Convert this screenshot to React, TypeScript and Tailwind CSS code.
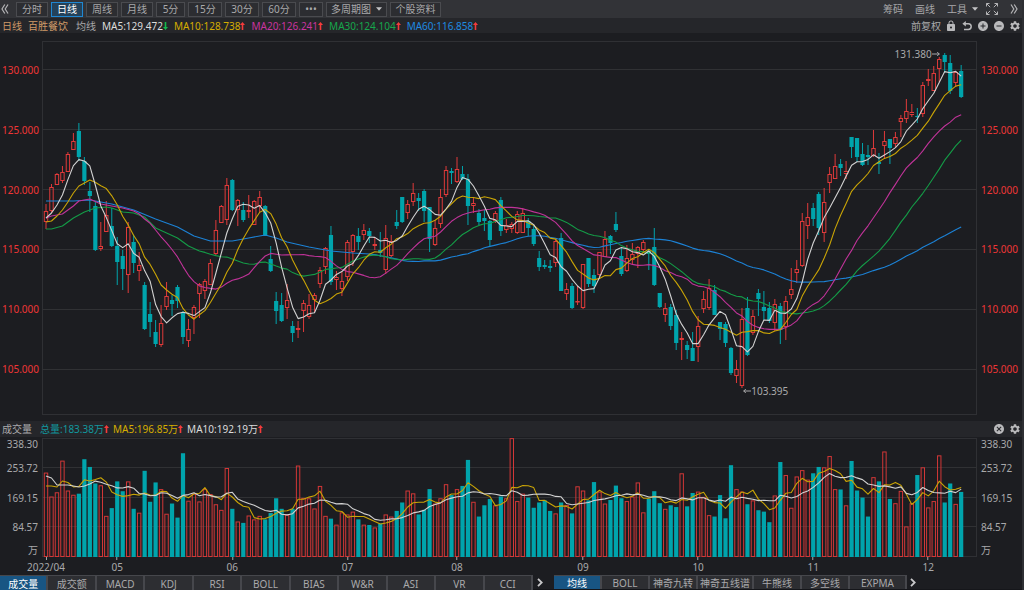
import React, { useState } from "react";
import clsx from "clsx";
import {
  MdAddCircle,
  MdCancel,
  MdLock,
  MdRemoveCircle,
  MdSettings,
} from "react-icons/md";

// [high, body top, body bottom, low, rising] on the price canvas
type Candle = [number, number, number, number, 0 | 1];

const FIRST_X = 46;
const STEP = 5.48;
const VOLUME_BASE = 557;
const VOLUME_SCALE = 119 / 338.3;

const candles: Candle[] = [
  [204, 211, 222, 229, 1], [184, 187, 211, 213, 1], [173, 174, 185, 185, 1],
  [166, 172, 181, 183, 1], [152, 154, 172, 172, 1], [133, 141, 150, 150, 1],
  [123, 131, 157, 161, 0], [157, 161, 181, 185, 0], [182, 191, 196, 212, 0],
  [202, 206, 250, 251, 0], [222, 246, 249, 251, 1], [201, 215, 232, 232, 1],
  [208, 226, 246, 247, 0], [237, 246, 262, 285, 0], [250, 256, 269, 290, 0],
  [222, 227, 275, 293, 1], [235, 242, 263, 273, 0], [252, 265, 271, 281, 1],
  [282, 285, 329, 330, 0], [302, 314, 322, 337, 0], [320, 332, 344, 347, 0],
  [305, 323, 345, 347, 1], [282, 296, 307, 310, 1], [295, 300, 304, 316, 0],
  [285, 287, 301, 308, 0], [311, 313, 337, 344, 0], [319, 329, 341, 347, 1],
  [305, 307, 318, 334, 1], [283, 284, 294, 318, 1], [279, 281, 291, 299, 1],
  [259, 263, 285, 285, 1], [220, 230, 254, 255, 1], [205, 206, 223, 223, 1],
  [178, 185, 220, 225, 1], [179, 180, 210, 211, 0], [199, 200, 210, 226, 1],
  [202, 210, 220, 222, 0], [195, 210, 212, 218, 1], [200, 201, 225, 225, 1],
  [191, 197, 206, 212, 1], [205, 206, 236, 236, 0], [246, 259, 271, 272, 0],
  [292, 301, 311, 324, 0], [293, 305, 321, 322, 0], [284, 300, 308, 319, 1],
  [321, 326, 333, 342, 0], [321, 328, 330, 338, 1], [300, 303, 311, 332, 1],
  [294, 305, 317, 319, 1], [293, 295, 300, 313, 1], [267, 270, 284, 288, 1],
  [247, 248, 267, 274, 1], [226, 235, 282, 285, 0], [271, 277, 280, 290, 1],
  [272, 281, 289, 296, 1], [240, 242, 277, 281, 1], [234, 235, 252, 266, 1],
  [228, 236, 242, 250, 0], [224, 230, 235, 240, 1], [228, 231, 236, 243, 0],
  [237, 244, 246, 250, 1], [232, 250, 253, 257, 0], [225, 238, 270, 274, 1],
  [235, 241, 256, 257, 1], [210, 222, 226, 229, 0], [197, 197, 222, 223, 0],
  [200, 204, 213, 219, 1], [183, 193, 202, 206, 1], [193, 198, 201, 211, 0],
  [189, 191, 211, 222, 0], [207, 207, 239, 252, 0], [220, 228, 245, 246, 1],
  [189, 197, 224, 228, 1], [166, 170, 195, 197, 1], [168, 171, 173, 184, 0],
  [157, 169, 182, 183, 1], [166, 174, 179, 180, 0], [174, 179, 206, 225, 0],
  [197, 203, 206, 213, 1], [209, 213, 222, 225, 0], [210, 218, 221, 231, 0],
  [220, 221, 240, 246, 0], [211, 213, 221, 223, 1], [197, 200, 231, 236, 0],
  [219, 225, 230, 233, 1], [222, 224, 229, 233, 1], [211, 214, 233, 234, 1],
  [208, 213, 233, 233, 1], [218, 221, 228, 236, 0], [226, 229, 244, 246, 0],
  [251, 258, 267, 271, 0], [260, 265, 267, 269, 0], [260, 266, 268, 272, 0],
  [239, 241, 263, 267, 1], [233, 238, 291, 291, 0], [283, 289, 294, 300, 1],
  [283, 286, 308, 309, 0], [286, 301, 302, 305, 1], [264, 264, 308, 309, 1],
  [258, 258, 284, 287, 0], [269, 275, 286, 293, 0], [252, 252, 275, 277, 1],
  [231, 239, 257, 257, 1], [235, 236, 243, 254, 0], [212, 224, 230, 232, 0],
  [248, 256, 274, 276, 0], [245, 258, 271, 272, 1], [243, 254, 260, 264, 1],
  [246, 247, 254, 268, 1], [240, 242, 250, 252, 1], [249, 251, 254, 270, 0],
  [228, 247, 285, 286, 0], [293, 293, 307, 308, 0], [303, 308, 315, 322, 1],
  [304, 307, 326, 330, 0], [310, 315, 343, 350, 0], [332, 338, 340, 360, 1],
  [341, 345, 350, 359, 0], [332, 348, 361, 361, 0], [316, 326, 347, 362, 1],
  [291, 299, 309, 313, 1], [279, 288, 308, 310, 1], [285, 290, 315, 315, 0],
  [322, 322, 329, 340, 0], [322, 324, 343, 347, 0], [347, 348, 373, 375, 0],
  [360, 369, 376, 383, 1], [308, 319, 386, 388, 1], [297, 308, 355, 356, 0],
  [310, 316, 333, 335, 1], [289, 293, 299, 316, 0], [291, 307, 311, 320, 0],
  [302, 308, 321, 323, 0], [299, 304, 323, 331, 1], [303, 306, 330, 344, 0],
  [296, 301, 327, 340, 1], [268, 289, 295, 299, 1], [260, 269, 273, 283, 1],
  [213, 221, 266, 267, 1], [203, 217, 226, 239, 1], [203, 208, 219, 226, 0],
  [192, 194, 228, 235, 0], [188, 202, 233, 242, 1], [167, 174, 183, 193, 1],
  [154, 166, 179, 179, 1], [159, 164, 168, 176, 0], [161, 171, 174, 179, 1],
  [137, 137, 147, 158, 0], [138, 138, 157, 162, 0], [143, 154, 165, 166, 0],
  [145, 155, 157, 165, 0], [130, 148, 156, 157, 1], [153, 162, 164, 174, 0],
  [131, 141, 146, 158, 1], [139, 139, 148, 164, 0], [132, 137, 144, 147, 1],
  [115, 118, 122, 137, 1], [99, 111, 119, 123, 1], [104, 112, 115, 117, 1],
  [108, 116, 117, 123, 0], [82, 85, 114, 117, 1], [69, 79, 81, 86, 1],
  [66, 73, 91, 91, 1], [57, 59, 69, 82, 1], [53, 55, 62, 73, 0],
  [55, 63, 91, 94, 0], [71, 72, 83, 87, 1], [65, 71, 97, 98, 0],
];

const volumes = [
  240, 172, 184, 274, 189, 177, 180, 278, 256, 209, 204, 117, 139, 215, 187,
  215, 137, 126, 245, 157, 212, 193, 123, 152, 112, 295, 160, 180, 158, 193,
  179, 150, 134, 253, 137, 101, 97, 118, 107, 117, 107, 125, 167, 137, 120,
  137, 260, 168, 167, 138, 202, 117, 109, 92, 127, 121, 129, 107, 92, 91,
  84, 95, 121, 115, 131, 155, 189, 181, 121, 134, 193, 152, 167, 207, 176,
  193, 202, 276, 157, 115, 147, 165, 147, 172, 167, 338, 159, 180, 169, 140,
  155, 161, 131, 124, 155, 148, 124, 201, 189, 161, 213, 186, 152, 162, 203,
  167, 159, 172, 212, 127, 166, 187, 153, 137, 147, 142, 238, 144, 182, 186,
  171, 119, 115, 176, 110, 261, 193, 186, 150, 161, 133, 129, 99, 175, 270,
  233, 140, 229, 247, 220, 238, 256, 255, 287, 193, 192, 147, 273, 189, 169,
  115, 227, 215, 300, 165, 153, 188, 87, 153, 233, 255, 141, 159, 289, 155,
  209, 151, 185,
];

const months = [
  { label: "2022/04", index: 0 },
  { label: "05", index: 13 },
  { label: "06", index: 34 },
  { label: "07", index: 55 },
  { label: "08", index: 75 },
  { label: "09", index: 98 },
  { label: "10", index: 119 },
  { label: "11", index: 140 },
  { label: "12", index: 161 },
];

const periods = [
  { label: "分时", width: "w-8" },
  { label: "日线", width: "w-8" },
  { label: "周线", width: "w-8" },
  { label: "月线", width: "w-8" },
  { label: "5分", width: "w-[29px]" },
  { label: "15分", width: "w-[34px]" },
  { label: "30分", width: "w-[34px]" },
  { label: "60分", width: "w-[34px]" },
  { label: "•••", width: "w-6" },
];

const averages = [
  { label: "MA5:129.472", color: "text-[#dcdcdc]", up: false },
  { label: "MA10:128.738", color: "text-[#d6ae00]", up: true },
  { label: "MA20:126.241", color: "text-[#c9349f]", up: true },
  { label: "MA30:124.104", color: "text-[#16a74c]", up: true },
  { label: "MA60:116.858", color: "text-[#1f8ae0]", up: true },
];

const priceTicks = ["130.000", "125.000", "120.000", "115.000", "110.000", "105.000"];
const volumeTicks = ["338.30", "253.72", "169.15", "84.57", "万"];

const subIndicators = ["成交量", "成交额", "MACD", "KDJ", "RSI", "BOLL", "BIAS", "W&R", "ASI", "VR", "CCI"];
const mainIndicators = [
  { label: "均线", width: "w-12" },
  { label: "BOLL", width: "w-12" },
  { label: "神奇九转", width: "w-12" },
  { label: "神奇五线谱", width: "w-14" },
  { label: "牛熊线", width: "w-12" },
  { label: "多空线", width: "w-12" },
  { label: "EXPMA", width: "w-[57px]" },
];

const xAt = (i: number) => FIRST_X + i * STEP;
const volumeY = (v: number) => VOLUME_BASE - v * VOLUME_SCALE;

// the head of each average needs older sessions, so it is given as [index, y]
const averageLine = (values: number[], span: number, head: number[][]) => {
  const points = head.map(([i, y]) => `${xAt(i).toFixed(1)},${y}`);
  for (let i = span - 1; i < values.length; i++) {
    let sum = 0;
    for (let j = i - span + 1; j <= i; j++) sum += values[j];
    points.push(`${xAt(i).toFixed(1)},${(sum / span).toFixed(1)}`);
  }
  return points.join(" ");
};

const closes = candles.map(([, top, bottom, , up]) => (up ? top : bottom));
const volumeTops = volumes.map(volumeY);

const priceLines = [
  {
    color: "#1c82d6",
    points: averageLine(closes, 60, [
      [0, 201], [5, 201], [8, 200], [12, 204], [16, 210], [20, 219], [24, 227],
      [27, 236], [30, 241], [34, 241], [37, 238], [40, 235], [42, 238],
      [44, 242], [48, 247], [52, 251], [56, 253],
    ]),
  },
  {
    color: "#149c47",
    points: averageLine(closes, 30, [
      [0, 229], [1, 229], [3, 226], [5, 218], [7, 212], [9, 208], [11, 207],
      [12, 208], [14, 212], [16, 213], [18, 217], [20, 228], [22, 233],
      [24, 238], [26, 246], [28, 251],
    ]),
  },
  {
    color: "#c03399",
    points: averageLine(closes, 20, [
      [0, 218], [1, 216], [3, 214], [5, 206], [6, 201], [8, 199], [10, 204],
      [12, 206], [14, 208], [16, 211], [17, 214], [18, 219],
    ]),
  },
  {
    color: "#c9a406",
    points: averageLine(closes, 10, [
      [0, 222], [1, 221], [2, 216], [3, 210], [4, 202], [5, 193], [6, 186],
      [7, 183], [8, 180],
    ]),
  },
  {
    color: "#d2d2d2",
    points: averageLine(closes, 5, [[0, 218], [1, 213], [2, 205], [3, 195]]),
  },
];

const volumeLines = [
  {
    color: "#c9a406",
    points: averageLine(volumeTops, 5, [[0, 486], [1, 486], [2, 487], [3, 481]]),
  },
  {
    color: "#d2d2d2",
    points: averageLine(volumeTops, 10, [
      [0, 476], [1, 478], [2, 485], [3, 485], [4, 485], [5, 486], [6, 487],
      [7, 486], [8, 484],
    ]),
  },
];

const TrendArrow = ({ up }: { up: boolean }) => (
  <svg
    viewBox="0 0 5 8"
    className={clsx("h-2 w-[5px]", up ? "text-[#f53b3b]" : "rotate-180 text-[#12b84a]")}
    fill="currentColor"
  >
    <path d="M2.5 0 5 3H3.3V8H1.7V3H0Z" />
  </svg>
);

const Caret = () => (
  <svg
    viewBox="0 0 6 4"
    className="pointer-events-none absolute top-1/2 right-1 h-1 w-1.5 -translate-y-1/2"
    fill="#c4c4c6"
  >
    <path d="M0 .3h6L3 3.7Z" />
  </svg>
);

const DoubleChevron = ({ left }: { left?: boolean }) => (
  <svg
    viewBox="0 0 8 10"
    className={clsx("h-2.5 w-2", left && "rotate-180")}
    fill="none"
    stroke="#b4b4b6"
    strokeWidth="1.2"
  >
    <path d="M1 .5 3.8 5 1 9.5M4.2.5 7 5 4.2 9.5" />
  </svg>
);

const TabChevron = () => (
  <svg viewBox="0 0 6 9" className="h-[9px] w-1.5" fill="none" stroke="#c8c8ca" strokeWidth="1.8">
    <path d="M1 .8 4.7 4.5 1 8.2" />
  </svg>
);

const IconButton = ({ label, children }: { label: string; children: React.ReactNode }) => (
  <button type="button" aria-label={label} className="flex size-3 items-center justify-center text-[#b9b9bb]">
    {children}
  </button>
);

const Grid = ({ ys }: { ys: number[] }) => (
  <g stroke="#303134" shapeRendering="crispEdges">
    {ys.map((y) => (
      <line key={y} x1="42" x2="977" y1={y} y2={y} vectorEffect="non-scaling-stroke" />
    ))}
  </g>
);

const Lines = ({ lines }: { lines: { color: string; points: string }[] }) => (
  <g fill="none" strokeWidth="1.1" strokeLinejoin="round">
    {lines.map((line) => (
      <polyline
        key={line.color}
        points={line.points}
        stroke={line.color}
        vectorEffect="non-scaling-stroke"
      />
    ))}
  </g>
);

const PriceChart = () => (
  <svg viewBox="42 41 935 374" preserveAspectRatio="none" className="block h-full w-full">
    <Grid ys={[69.5, 129.5, 189.5, 249.5, 309.5, 369.5]} />
    {candles.map(([high, top, bottom, low, up], i) => {
      const x = xAt(i);
      if (!up) {
        return (
          <g key={i} fill="#00a4ac">
            <rect x={x - 0.5} y={high} width="1" height={low - high} />
            <rect x={x - 2.1} y={top} width="4.2" height={Math.max(bottom - top, 1)} />
          </g>
        );
      }
      return (
        <g key={i} fill="none" stroke="#e03a3a">
          <path d={`M${x} ${high}V${top}M${x} ${bottom}V${low}`} />
          <rect
            x={x - 1.7}
            y={top + 0.5}
            width="3.4"
            height={Math.max(bottom - top - 1, 0.5)}
          />
        </g>
      );
    })}
    <Lines lines={priceLines} />
  </svg>
);

const VolumeChart = () => (
  <svg viewBox="42 438 935 119" preserveAspectRatio="none" className="block h-full w-full">
    <Grid ys={[467.5, 497.5, 526.5]} />
    {volumes.map((v, i) => {
      const x = xAt(i);
      const y = volumeY(v);
      return candles[i][4] ? (
        <rect
          key={i}
          x={x - 1.7}
          y={y + 0.5}
          width="3.4"
          height={VOLUME_BASE - y - 1}
          fill="none"
          stroke="#d23737"
        />
      ) : (
        <rect key={i} x={x - 2.1} y={y} width="4.2" height={VOLUME_BASE - y} fill="#00a4ac" />
      );
    })}
    <Lines lines={volumeLines} />
  </svg>
);

export default function App() {
  const [period, setPeriod] = useState("日线");
  const [sub, setSub] = useState("成交量");
  const [main, setMain] = useState("均线");

  return (
    <div className="flex min-h-screen w-full flex-col border-r-2 border-[#2e2f33] bg-[#1c1d21] font-['Noto_Sans','Noto_Sans_CJK_SC',sans-serif] text-[10px] leading-4 text-[#a9a9ab]">
      <header className="flex h-[18px] items-center bg-[#323337]">
        <button type="button" aria-label="收起" className="flex w-4 pl-px">
          <DoubleChevron left />
        </button>
        <nav className="flex items-center gap-[3px]">
          {periods.map(({ label, width }) => (
            <button
              key={label}
              type="button"
              onClick={() => setPeriod(label)}
              className={clsx(
                "flex h-[15px] items-center justify-center border whitespace-nowrap",
                width,
                period === label
                  ? "border-[#1f87d2] bg-[#24425a] text-white"
                  : "border-[#4a4b4f] bg-[#2c2d31]"
              )}
            >
              {label}
            </button>
          ))}
          <div className="relative h-[15px] w-[61px] border border-[#4a4b4f] bg-[#2c2d31]">
            <select aria-label="多周期图" className="block h-full w-full appearance-none pl-1 leading-3">
              <option>多周期图</option>
            </select>
            <Caret />
          </div>
          <button
            type="button"
            className="flex h-[15px] w-[51px] items-center justify-center border border-[#4a4b4f] bg-[#2c2d31]"
          >
            个股资料
          </button>
        </nav>
        <div className="ml-auto flex items-center pr-1">
          <button type="button" className="mr-3">筹码</button>
          <button type="button" className="mr-3">画线</button>
          <div className="relative mr-1 h-4 w-[35px]">
            <select aria-label="工具" className="block h-full w-full appearance-none leading-4">
              <option>工具</option>
            </select>
            <Caret />
          </div>
          <button type="button" aria-label="全屏" className="mr-3">
            <svg viewBox="0 0 12 12" className="size-3" fill="none" stroke="#b4b4b6">
              <path d="M.5 3.5v-3h3M.5.5l3.7 3.7M8.5.5h3v3M11.5.5 7.8 4.2M.5 8.5v3h3M.5 11.5l3.7-3.7M11.5 8.5v3h-3M11.5 11.5 7.8 7.8" />
            </svg>
          </button>
          <button type="button" aria-label="展开">
            <DoubleChevron />
          </button>
        </div>
      </header>

      <div className="flex h-[15px] items-center bg-[#25262a] pl-0.5">
        <span className="mr-1.5 text-[#d09a68]">日线</span>
        <span className="mr-2 text-[#d09a68]">百胜餐饮</span>
        <span className="mr-1.5">均线</span>
        <div className="flex gap-1.5">
          {averages.map(({ label, color, up }) => (
            <span key={label} className={clsx("flex items-center", color)}>
              {label}
              <TrendArrow up={up} />
            </span>
          ))}
        </div>
        <div className="ml-auto flex items-center gap-1 pr-px">
          <button type="button">前复权</button>
          <IconButton label="锁定">
            <MdLock size={12} />
          </IconButton>
          <IconButton label="撤销">
            <svg viewBox="0 0 10 10" className="size-2.5" fill="none" stroke="currentColor" strokeWidth="1.5">
              <path d="M2 2.7h4.3a2.8 2.8 0 0 1 0 5.8H2" />
              <path d="M3.8 0v5.4L.4 2.7Z" fill="currentColor" stroke="none" />
            </svg>
          </IconButton>
          <IconButton label="放大">
            <MdAddCircle size={12} />
          </IconButton>
          <IconButton label="缩小">
            <MdRemoveCircle size={12} />
          </IconButton>
          <IconButton label="设置">
            <MdSettings size={12} />
          </IconButton>
        </div>
      </div>

      <section className="mt-2 grid h-[374px] grid-cols-[42px_1fr_45px] text-[#ee3636]">
        <div className="flex flex-col justify-between pt-[21px] pr-[3px] pb-[38px] text-right">
          {priceTicks.map((tick) => (
            <span key={tick}>{tick}</span>
          ))}
        </div>
        <div className="relative h-[374px] ring-1 ring-[#2f3034] ring-inset">
          <PriceChart />
          <span className="absolute top-[5px] right-[4%] flex items-center text-[#a9a9ab]">
            131.380
            <svg viewBox="0 0 8 6" className="h-1.5 w-2" fill="none" stroke="currentColor">
              <path d="M0 3h7.5M5.2 1l2 2-2 2" />
            </svg>
          </span>
          <span className="absolute bottom-4 left-[75%] flex items-center text-[#a9a9ab]">
            <svg viewBox="0 0 8 6" className="h-1.5 w-2" fill="none" stroke="currentColor">
              <path d="M8 3H.5M2.8 1l-2 2 2 2" />
            </svg>
            103.395
          </span>
        </div>
        <div className="flex flex-col justify-between pt-[21px] pb-[38px] pl-1">
          {priceTicks.map((tick) => (
            <span key={tick}>{tick}</span>
          ))}
        </div>
      </section>

      <div className="mt-1.5 flex h-4 items-center bg-[#25262a] pl-0.5">
        <span className="mr-2">成交量</span>
        <div className="flex gap-1">
          <span className="flex items-center text-[#12989f]">
            总量:183.38万
            <TrendArrow up />
          </span>
          <span className="flex items-center text-[#d6ae00]">
            MA5:196.85万
            <TrendArrow up />
          </span>
          <span className="flex items-center text-[#dcdcdc]">
            MA10:192.19万
            <TrendArrow up />
          </span>
        </div>
        <div className="ml-auto flex items-center gap-1 pr-px">
          <IconButton label="关闭">
            <MdCancel size={12} />
          </IconButton>
          <IconButton label="成交量设置">
            <MdSettings size={12} />
          </IconButton>
        </div>
      </div>

      <section className="mt-px grid grid-cols-[42px_1fr_45px]">
        <div className="grid grid-rows-[12px_35px_25px_33px_14px] items-center pr-1 text-right">
          {volumeTicks.map((tick) => (
            <span key={tick}>{tick}</span>
          ))}
        </div>
        <div className="h-[119px] ring-1 ring-[#2f3034] ring-inset">
          <VolumeChart />
        </div>
        <div className="grid grid-rows-[12px_35px_25px_33px_14px] items-center pl-1">
          {volumeTicks.map((tick) => (
            <span key={tick}>{tick}</span>
          ))}
        </div>
        <div className="relative col-start-2 h-[18px]">
          {months.map(({ label, index }) => (
            <span
              key={label}
              className="absolute top-0 flex -translate-x-1/2 flex-col items-center"
              style={{ left: `${((xAt(index) - 42) / 935) * 100}%` }}
            >
              <i className="h-[3px] w-px bg-[#a9a9ab]" />
              <span className="leading-[14px]">{label}</span>
            </span>
          ))}
        </div>
      </section>

      <footer className="flex h-[15px] items-center border-b border-[#15161a] whitespace-nowrap">
        <div className="grid h-full w-[533px] grid-cols-11">
          {subIndicators.map((label) => (
            <button
              key={label}
              type="button"
              onClick={() => setSub(label)}
              className={clsx(
                "flex items-center justify-center border-t border-r-2 border-[#46474c]",
                sub === label ? "bg-[#185583] text-white" : "bg-[#2d2e32]"
              )}
            >
              {label}
            </button>
          ))}
        </div>
        <button type="button" aria-label="更多指标" className="flex w-[21px] justify-center pr-2">
          <TabChevron />
        </button>
        <div className="flex h-full">
          {mainIndicators.map(({ label, width }) => (
            <button
              key={label}
              type="button"
              onClick={() => setMain(label)}
              className={clsx(
                "flex items-center justify-center border-t border-r-2 border-[#46474c]",
                width,
                main === label ? "bg-[#185583] text-white" : "bg-[#2d2e32]"
              )}
            >
              {label}
            </button>
          ))}
        </div>
        <button type="button" aria-label="更多主图指标" className="flex w-3 justify-center">
          <TabChevron />
        </button>
      </footer>
    </div>
  );
}
